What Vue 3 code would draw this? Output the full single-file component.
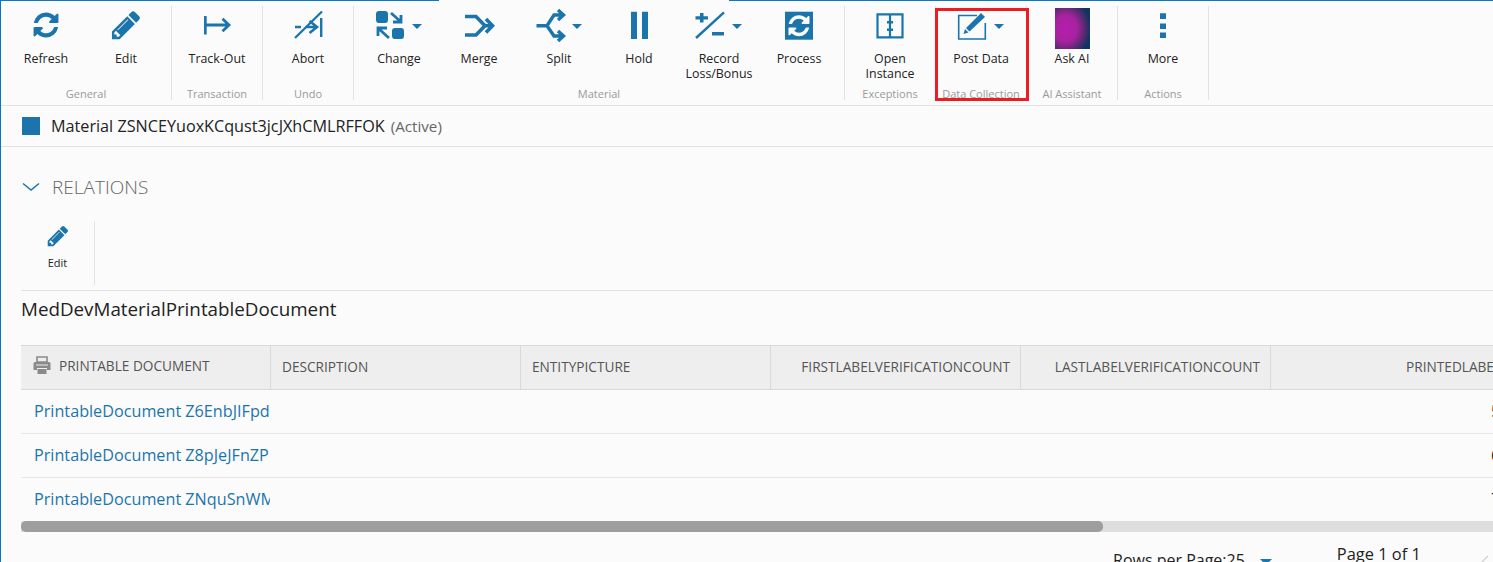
<script setup>
const BLUE = '#1b75ac'
const REFRESH = 'M1639 1056q0 5-1 7-64 268-268 434.5t-478 166.5q-146 0-282.500-55t-243.500-157l-129 129q-19 19-45 19t-45-19-19-45v-448q0-26 19-45t45-19h448q26 0 45 19t19 45-19 45l-137 137q71 66 161 102t187 36q134 0 250-65t186-179q11-17 53-117 8-23 30-23h192q13 0 22.500 9.500t9.500 22.500zm25-800v448q0 26-19 45t-45 19h-448q-26 0-45-19t-19-45 19-45l138-138q-148-137-349-137-134 0-250 65t-186 179q-11 17-53 117-8 23-30 23h-199q-13 0-22.500-9.500t-9.500-22.500v-7q65-268 270-434.500t480-166.500q146 0 284 55.500t245 156.500l130-129q19-19 45-19t45 19 19 45z'
const PENCIL = 'M491 1536l91-91-235-235-91 91v107h128v128h107zm523-928q0-22-22-22-10 0-17 7l-542 542q-7 7-7 17 0 22 22 22 10 0 17-7l542-542q7 7 7 17zm-54-192l416 416-832 832h-416v-416zm683 96q0 53-37 90l-166 166-416-416 166-165q36-38 90-38 53 0 91 38l235 234q37 39 37 91z'

const fill = (d, extra = {}) => ({ d, fill: BLUE, ...extra })
const line = (d, w) => ({ d, fill: 'none', stroke: BLUE, 'stroke-width': w })
const CARET = fill('M53 18h10l-5 5z')

const icons = {
  refresh: [fill(REFRESH, { transform: 'translate(25.500 4.500) scale(.0162)' })],
  edit: [fill(PENCIL, { transform: 'translate(23.600 2.600) scale(.0184)' })],
  track: [fill('M27 10h2.700v18.500H27z'), line('M29 19H52M45.500 12.800 52 19l-6.500 6.200', 2.800)],
  abort: [
    line('M27 32 54 5.500', 2.300),
    fill('M52 12h2.400v19H52z'),
    line('M27 21h6M38 21H49M41.500 15 49 21l-7.500 6', 2.600)
  ],
  change: [
    fill('M20 5h6a3 3 0 0 1 3 3v6a3 3 0 0 1-3 3h-6a3 3 0 0 1-3-3V8a3 3 0 0 1 3-3zM36 22h6a3 3 0 0 1 3 3v5a3 3 0 0 1-3 3h-6a3 3 0 0 1-3-3v-5a3 3 0 0 1 3-3z'),
    line('M32 7l9 8M42 9v7h-8M30 32l-10-9M19 30v-8h9', 2.800),
    CARET
  ],
  merge: [line('M26 10.500H37l9 9.200-9 9.300H26M46 19.700h7M47 13l6.500 6.700L47 26.400', 3.600)],
  split: [line('M17.500 19.700H28L35 9h9M28 19.700 35 30h9M39 4l5.500 5-5.500 5M39 25l5.500 5-5.500 5', 3.400), CARET],
  hold: [fill('M32 5.700h6V33h-6zM43 5.700h6V33h-6z')],
  record: [
    fill('M21 7h3.500v3.200H29v3.200h-4.500v3.200H21v-3.200h-4.500v-3.200H21zM33 26h12v3.400H33z'),
    line('M17 32 45 6.300', 2.400),
    CARET
  ],
  process: [
    fill('M26 5.700h28v28H26z'),
    { d: REFRESH, fill: '#fbfbfb', transform: 'translate(27.700 7.400) scale(.0137)' }
  ],
  instance: [
    line('M27.500 8.300h25v23h-25z', 2.200),
    line('M40 8V31', 2.200),
    fill('M37 15h6v2.400h-6zM37 22.500h6v2.400h-6z')
  ],
  post: [
    line('M36 9.500H17.700V33H44.300V17', 1.600),
    fill('M25 22 40 7l4 4-15.500 14.500zM22.500 28l1.500-5 3.500 3.500z'),
    CARET
  ],
  more: [fill('M37 7.300h6V13h-6zM37 17.500h6V23h-6zM37 26.500h6V32h-6z')]
}

const groups = [
  { name: 'General', items: [{ label: 'Refresh', icon: 'refresh' }, { label: 'Edit', icon: 'edit' }] },
  { name: 'Transaction', items: [{ label: 'Track-Out', icon: 'track' }] },
  { name: 'Undo', items: [{ label: 'Abort', icon: 'abort' }] },
  {
    name: 'Material',
    items: [
      { label: 'Change', icon: 'change' },
      { label: 'Merge', icon: 'merge' },
      { label: 'Split', icon: 'split' },
      { label: 'Hold', icon: 'hold' },
      { label: 'Record Loss/Bonus', icon: 'record' },
      { label: 'Process', icon: 'process' }
    ]
  },
  { name: 'Exceptions', items: [{ label: 'Open Instance', icon: 'instance' }] },
  { name: 'Data Collection', highlight: true, items: [{ label: 'Post Data', icon: 'post' }] },
  { name: 'AI Assistant', items: [{ label: 'Ask AI', ai: true }] },
  { name: 'Actions', items: [{ label: 'More', icon: 'more' }] }
]

const columns = [
  { label: 'DESCRIPTION' },
  { label: 'ENTITYPICTURE' },
  { label: 'FIRSTLABELVERIFICATIONCOUNT', right: true },
  { label: 'LASTLABELVERIFICATIONCOUNT', right: true }
]

const rows = [
  { name: 'PrintableDocument Z6EnbJIFpd', value: '5' },
  { name: 'PrintableDocument Z8pJeJFnZP', value: '6' },
  { name: 'PrintableDocument ZNquSnWMvhLa', value: '7' }
]
</script>

<template>
  <div class="page">
    <div class="top-line">
      <span class="seg seg-a"></span>
      <span class="seg seg-b"></span>
    </div>

    <div class="toolbar">
      <section v-for="g in groups" :key="g.name" class="group">
        <div class="items">
          <button v-for="it in g.items" :key="it.label" class="item" type="button">
            <svg v-if="it.ai" class="icon" viewBox="0 0 80 40" width="80" height="40">
              <defs>
                <radialGradient id="aiGlow" cx="0.3" cy="0.5" r="0.72">
                  <stop offset="0" stop-color="#b41fae" />
                  <stop offset="0.45" stop-color="#a8229f" />
                  <stop offset="0.75" stop-color="#5c2a72" />
                  <stop offset="1" stop-color="#10345f" />
                </radialGradient>
              </defs>
              <rect x="23" y="2" width="35" height="41" fill="url(#aiGlow)" />
            </svg>
            <svg v-else class="icon" viewBox="0 0 80 40" width="80" height="40">
              <path v-for="(p, i) in icons[it.icon]" :key="i" v-bind="p" />
            </svg>
            <span class="item-label">{{ it.label }}</span>
          </button>
        </div>
        <div class="group-name">{{ g.name }}</div>
        <div v-if="g.highlight" class="highlight"></div>
      </section>
    </div>

    <div class="title-bar">
      <span class="square"></span>
      <span class="title">Material ZSNCEYuoxKCqust3jcJXhCMLRFFOK</span>
      <span class="state">(Active)</span>
    </div>

    <div class="content">
      <div class="relations">
        <svg class="chevron" width="18" height="10" viewBox="0 0 18 10">
          <path d="M1 1.500 9 8l8-6.500" fill="none" stroke="#1b75ac" stroke-width="1.500" />
        </svg>
        <span class="relations-text">RELATIONS</span>
      </div>

      <div class="sub-toolbar">
        <button class="sub-item" type="button">
          <svg width="24" height="24" viewBox="0 0 1792 1792">
            <path :d="PENCIL" :fill="BLUE" />
          </svg>
          <span class="sub-label">Edit</span>
        </button>
      </div>

      <h2 class="doc-title">MedDevMaterialPrintableDocument</h2>

      <div class="table">
        <div class="tr head">
          <div class="th first">
            <svg width="18" height="19" viewBox="0 0 18 19">
              <path d="M4 1h10v5H4z" fill="none" stroke="#8a8a8a" stroke-width="1.600" />
              <path d="M2 6h14a1.500 1.500 0 0 1 1.500 1.500V14H14v-2H4v2H.500V7.500A1.500 1.500 0 0 1 2 6z" fill="#8a8a8a" />
              <path d="M3 9h12" stroke="#eee" stroke-width="1" />
              <path d="M4.500 13h9v5h-9z" fill="#8a8a8a" />
            </svg>
            <span>PRINTABLE DOCUMENT</span>
          </div>
          <div v-for="c in columns" :key="c.label" class="th" :class="{ right: c.right }">{{ c.label }}</div>
          <div class="th last">PRINTEDLABELCOUNT</div>
        </div>
        <div v-for="r in rows" :key="r.name" class="tr body">
          <div class="td link"><span class="clip">{{ r.name }}</span></div>
          <div v-for="c in columns" :key="c.label" class="td"></div>
          <div class="td value">{{ r.value }}</div>
        </div>
      </div>

      <div class="scrollbar"><div class="thumb"></div></div>

      <div class="pager">
        <span class="rows-per">Rows per Page:25</span>
        <span class="rows-caret"></span>
        <span class="page-of">Page 1 of 1</span>
        <svg class="next" width="12" height="12" viewBox="0 0 12 12">
          <path d="M1 10 9 2" fill="none" stroke="#d0d0d0" stroke-width="1.200" />
        </svg>
      </div>
    </div>
  </div>
</template>

<style scoped>
.page {
  width: 1493px;
  height: 562px;
  box-sizing: border-box;
  border-left: 1px solid #0a75bb;
  background: #fbfbfb;
  overflow: hidden;
  font-family: "Open Sans", "Liberation Sans", sans-serif;
  color: #222;
}
.top-line {
  display: flex;
  height: 1px;
}
.seg {
  display: block;
  height: 1px;
  background: #0a78c2;
}
.seg-a {
  width: 438px;
}
.seg-b {
  width: 764px;
  margin-left: 290px;
}
.toolbar {
  display: flex;
  padding: 5px 0;
  height: 94px;
  border-bottom: 1px solid #e2e2e2;
}
.group {
  position: relative;
  display: flex;
  flex-direction: column;
  height: 94px;
  padding: 0 5px;
  border-right: 1px solid #e2e2e2;
}
.items {
  display: flex;
  height: 82px;
}
.item {
  display: flex;
  flex-direction: column;
  align-items: center;
  width: 80px;
  padding: 0;
  border: 0;
  background: none;
  font: inherit;
  color: inherit;
}
.icon {
  display: block;
  flex: none;
  overflow: visible;
}
.item-label {
  margin-top: 5px;
  padding: 0 6px;
  font-size: 12.400px;
  line-height: 15px;
  text-align: center;
  color: #222;
}
.group-name {
  font-size: 11px;
  line-height: 12px;
  text-align: center;
  white-space: nowrap;
  color: #9a9a9a;
}
.highlight {
  position: absolute;
  left: -1px;
  top: 2px;
  width: 94px;
  height: 93px;
  box-sizing: border-box;
  border: 3px solid #ed1c24;
  pointer-events: none;
}
.title-bar {
  display: flex;
  align-items: center;
  height: 40px;
  padding-left: 21px;
  border-bottom: 1px solid #e2e2e2;
}
.square {
  width: 18px;
  height: 18px;
  background: #1b75ac;
  margin-right: 11px;
}
.title {
  font-size: 16.200px;
  color: #222;
}
.state {
  margin-left: 6px;
  font-size: 15.200px;
  color: #666;
}
.content {
  padding-left: 20px;
}
.relations {
  display: flex;
  align-items: center;
  height: 24px;
  margin-top: 28px;
}
.chevron {
  margin-left: 1px;
}
.relations-text {
  margin-left: 12px;
  font-size: 19px;
  font-weight: 300;
  color: #666;
}
.sub-toolbar {
  display: flex;
  height: 64px;
  margin-top: 22px;
  padding-bottom: 5px;
  border-bottom: 1px solid #e2e2e2;
}
.sub-item {
  display: flex;
  flex-direction: column;
  align-items: center;
  width: 74px;
  padding: 3px 0 0;
  border: 0;
  border-right: 1px solid #e2e2e2;
  background: none;
  font: inherit;
}
.sub-label {
  margin-top: 8px;
  font-size: 11px;
  line-height: 14px;
  color: #222;
}
.doc-title {
  margin: 5px 0 23px;
  font-size: 18.800px;
  font-weight: 400;
  line-height: 26px;
  color: #222;
}
.table {
  width: 1600px;
}
.tr {
  display: flex;
}
.head {
  height: 43px;
  background: #eeeeee;
  border-top: 1px solid #d9d9d9;
  border-bottom: 1px solid #d9d9d9;
}
.th {
  display: flex;
  align-items: center;
  flex: none;
  width: 250px;
  box-sizing: border-box;
  padding: 0 10px 2px 11px;
  border-right: 1px solid #d9d9d9;
  font-size: 13.650px;
  white-space: nowrap;
  color: #555;
}
.th.first {
  gap: 8px;
  padding-left: 12px;
  padding-bottom: 4px;
}
.th.right {
  justify-content: flex-end;
}
.th.last {
  width: 287px;
  justify-content: flex-end;
  border-right: 0;
}
.body {
  height: 43px;
  border-bottom: 1px solid #e6e6e6;
}
.body:last-of-type {
  border-bottom: 0;
}
.td {
  display: flex;
  align-items: center;
  flex: none;
  width: 250px;
  box-sizing: border-box;
  padding-bottom: 1px;
}
.td.link {
  padding-left: 13px;
  font-size: 16.200px;
  color: #1b75ac;
}
.clip {
  display: block;
  width: 236px;
  overflow: hidden;
  white-space: nowrap;
}
.td.value {
  width: 287px;
  padding-left: 220px;
  font-size: 16px;
  color: #222;
}
.scrollbar {
  height: 11px;
  background: #dedede;
}
.thumb {
  width: 1082px;
  height: 11px;
  border-radius: 5px;
  background: #9e9e9e;
}
.pager {
  display: flex;
  align-items: flex-start;
  height: 40px;
  padding-top: 17px;
}
.rows-per {
  margin-left: 1092px;
  font-size: 16px;
  line-height: 22px;
  color: #222;
  white-space: nowrap;
}
.rows-caret {
  width: 0;
  height: 0;
  margin: 10px 0 0 15px;
  border-left: 6px solid transparent;
  border-right: 6px solid transparent;
  border-top: 6px solid #1b75ac;
}
.page-of {
  margin: -6px 0 0 65px;
  font-size: 16.400px;
  line-height: 22px;
  color: #222;
  white-space: nowrap;
}
.next {
  margin: 5px 0 0 58px;
}
</style>

<style>
html,
body {
  margin: 0;
  overflow: hidden;
  background: #fbfbfb;
}
</style>
